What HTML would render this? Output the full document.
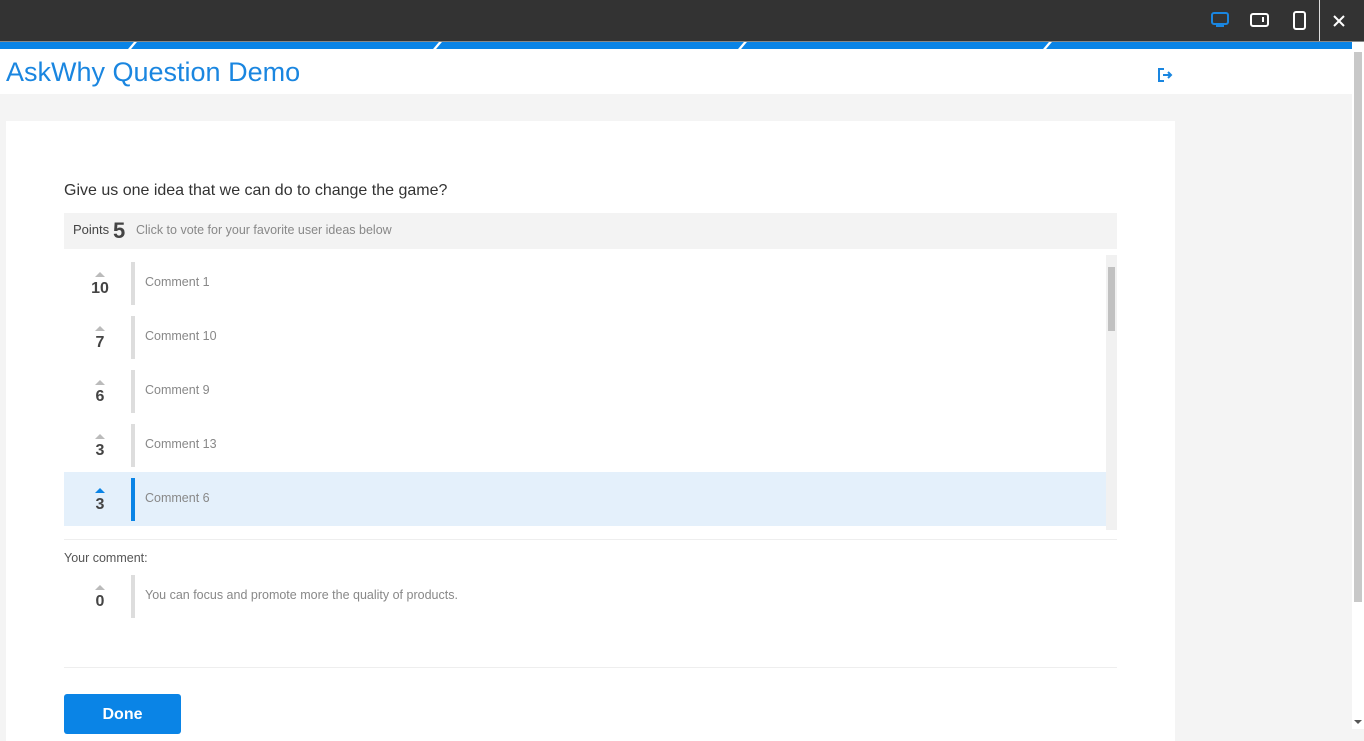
<!DOCTYPE html>
<html><head><meta charset="utf-8"><style>
*{margin:0;padding:0;box-sizing:border-box}
body{width:1364px;height:729px;overflow:hidden;background:#f4f4f4;font-family:"Liberation Sans",sans-serif;position:relative}
.top{position:absolute;left:0;top:0;width:1364px;height:42px;background:#333;border-bottom:1px solid #888}
.stripe{position:absolute;left:0;top:42px;width:1352px;height:7px;background:#0a84e6}
.stripe i{position:absolute;top:0;width:3px;height:7px;background:#fff;transform:skewX(-40deg)}
.hdr{position:absolute;left:0;top:49px;width:1352px;height:45px;background:#fff}
.title{position:absolute;left:6px;top:57px;font-size:27px;color:#1a86e0}
.sb{position:absolute;left:1352px;top:42px;width:12px;height:687px;background:#fff}
.sb div{position:absolute;left:2px;top:10px;width:8px;height:550px;background:#c8c8c8}
.card{position:absolute;left:6px;top:121px;width:1169px;height:620px;background:#fff}
.q{position:absolute;left:64px;top:182px;font-size:16px;color:#333}
.pts{position:absolute;left:64px;top:213px;width:1053px;height:36px;background:#f3f3f3;font-size:13px;color:#444}
.row{position:absolute;left:64px;width:1042px;height:54px}
.row .arr{position:absolute;left:31px;top:16px;width:0;height:0;border-left:5px solid transparent;border-right:5px solid transparent;border-bottom:5px solid #bbb}
.row .n{position:absolute;left:0;width:72px;text-align:center;top:24px;font-size:16px;font-weight:bold;color:#444}
.row .bar{position:absolute;left:67px;top:6px;width:4px;height:43px;background:#ddd}
.row .t{position:absolute;left:81px;top:19px;font-size:12.5px;color:#888}
.sel{background:#e4f0fb}
.sel .bar{background:#0a84e6}.sel .arr{border-bottom-color:#0a84e6}
.isb{position:absolute;left:1106px;top:255px;width:11px;height:275px;background:#f1f1f1}
.isb div{position:absolute;left:2px;top:12px;width:7px;height:64px;background:#c1c1c1}
.hr{position:absolute;left:64px;width:1053px;height:1px;background:#eee}
.btn{position:absolute;left:64px;top:694px;width:117px;height:40px;background:#0a84e6;border-radius:3px;color:#fff;font-size:16px;font-weight:bold;text-align:center;line-height:42px}
</style></head><body>
<div class="top"></div>
<svg style="position:absolute;left:1208px;top:11px" width="140" height="20">
<rect x="4" y="2" width="16" height="11" rx="2" fill="none" stroke="#1a86e0" stroke-width="2"/><rect x="8" y="14" width="8" height="2" fill="#1a86e0"/>
<rect x="43" y="3" width="17" height="12" rx="2" fill="none" stroke="#fff" stroke-width="2"/><rect x="54" y="6" width="2" height="5" fill="#fff"/>
<rect x="86" y="1" width="11" height="17" rx="2" fill="none" stroke="#fff" stroke-width="2"/>
<path d="M126 5l10 10M136 5l-10 10" stroke="#fff" stroke-width="2"/>
</svg>
<div style="position:absolute;left:1319px;top:0;width:1px;height:41px;background:#ddd"></div>
<div class="stripe"><i style="left:131px"></i><i style="left:436px"></i><i style="left:741px"></i><i style="left:1046px"></i></div>
<div class="hdr"></div>
<div class="title">AskWhy Question Demo</div>
<svg style="position:absolute;left:1157px;top:67px" width="18" height="16"><path d="M7 2H2v12h5" fill="none" stroke="#1a86e0" stroke-width="2"/><path d="M6 8h8M11 5l3 3-3 3" fill="none" stroke="#1a86e0" stroke-width="2"/></svg>
<div class="sb"><div></div></div>
<div style="position:absolute;left:1354px;top:720px;width:0;height:0;border-left:4px solid transparent;border-right:4px solid transparent;border-top:4px solid #555"></div>
<div class="card"></div>
<div class="q">Give us one idea that we can do to change the game?</div>
<div class="pts"><span style="position:absolute;left:9px;top:9px">Points</span><span style="position:absolute;left:49px;top:5px;font-size:22px;font-weight:bold;color:#444">5</span><span style="position:absolute;left:72px;top:10px;color:#888;font-size:12.5px">Click to vote for your favorite user ideas below</span></div>
<div class="row" style="top:256px"><div class="arr"></div><div class="n">10</div><div class="bar"></div><div class="t">Comment 1</div></div>
<div class="row" style="top:310px"><div class="arr"></div><div class="n">7</div><div class="bar"></div><div class="t">Comment 10</div></div>
<div class="row" style="top:364px"><div class="arr"></div><div class="n">6</div><div class="bar"></div><div class="t">Comment 9</div></div>
<div class="row" style="top:418px"><div class="arr"></div><div class="n">3</div><div class="bar"></div><div class="t">Comment 13</div></div>
<div class="row sel" style="top:472px"><div class="arr"></div><div class="n">3</div><div class="bar"></div><div class="t">Comment 6</div></div>
<div class="isb"><div></div></div>
<div class="hr" style="top:539px"></div>
<div style="position:absolute;left:64px;top:551px;font-size:12.5px;color:#555">Your comment:</div>
<div class="row" style="top:569px"><div class="arr"></div><div class="n">0</div><div class="bar"></div><div class="t">You can focus and promote more the quality of products.</div></div>
<div class="hr" style="top:667px"></div>
<div class="btn">Done</div>
</body></html>
